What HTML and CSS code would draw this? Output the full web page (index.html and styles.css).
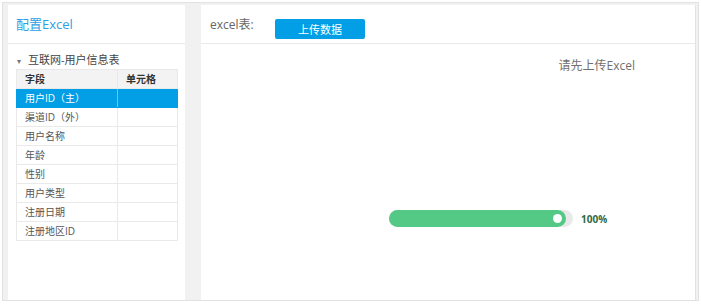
FILE: index.html
```html
<!DOCTYPE html>
<html>
<head>
    <title>配置Excel</title>
    <link rel="stylesheet" href="styles.css">
</head>
<body>
    <div class="frame">
        <!-- left: field list -->
        <div class="side">
            <div class="side-head">配置Excel</div>
            <div class="tree-title"><span class="caret">&#9662;</span>互联网-用户信息表</div>
            <table class="fields">
                <tr class="th"><td>字段</td><td>单元格</td></tr>
                <tr class="active"><td>用户ID（主）</td><td></td></tr>
                <tr><td>渠道ID（外）</td><td></td></tr>
                <tr><td>用户名称</td><td></td></tr>
                <tr><td>年龄</td><td></td></tr>
                <tr><td>性别</td><td></td></tr>
                <tr><td>用户类型</td><td></td></tr>
                <tr><td>注册日期</td><td></td></tr>
                <tr><td>注册地区ID</td><td></td></tr>
            </table>
        </div>

        <!-- right: upload area -->
        <div class="main">
            <div class="main-head">
                <span class="label">excel表:</span>
                <button class="upload">上传数据</button>
            </div>
            <div class="hint">请先上传Excel</div>
            <div class="progress-row">
                <div class="track">
                    <div class="fill" style="width: 96%"><span class="knob"></span></div>
                </div>
                <span class="pct">100%</span>
            </div>
        </div>
    </div>
</body>
</html>
```

FILE: styles.css
```css
body {
    margin: 0;
    padding: 0;
    background-color: #fff;
    font-family: "Open Sans", "Noto Sans CJK SC", sans-serif;
}

.frame {
    display: flex;
    margin: 2px 0 0 2px;
    width: 688px;
    height: 295px;
    padding: 2px 2px 0 5px;
    border: 1px solid #e2e2e2;
    background-color: #f1f1f1;
    gap: 16px;
}

/* left panel */
.side {
    width: 177px;
    background-color: #fff;
}

.side-head {
    height: 38px;
    line-height: 38px;
    padding-left: 8px;
    font-size: 13px;
    color: #2e9fe3;
    border-bottom: 1px solid #e9e9e9;
}

.tree-title {
    padding: 9px 0 0 9px;
    height: 16px;
    line-height: 14px;
    font-size: 11px;
    color: #444;
}

.caret {
    display: inline-block;
    width: 11px;
    font-size: 8px;
    color: #777;
}

.fields {
    margin-left: 8px;
    width: 162px;
    border-collapse: collapse;
    font-size: 10px;
    color: #555;
}

.fields td {
    height: 18px;
    padding: 0 0 0 8px;
    border: 1px solid #e9e9e9;
    line-height: 18px;
}

.fields td:first-child {
    width: 92px;
}

.fields .th td {
    background-color: #f3f3f3;
    font-weight: bold;
    color: #333;
}

.fields .active td {
    background-color: #029ee6;
    color: #fff;
    border-color: #029ee6;
}

.fields .active td:first-child {
    border-right-color: #6cc4f0;
}

/* right panel */
.main {
    flex: 1;
    background-color: #fff;
    border-right: 1px solid #e2e2e2;
}

.main-head {
    display: flex;
    align-items: center;
    height: 38px;
    padding-left: 9px;
    border-bottom: 1px solid #e9e9e9;
}

.label {
    font-size: 12px;
    color: #666;
    width: 65px;
}

.upload {
    width: 90px;
    height: 20px;
    padding: 0;
    border: none;
    border-radius: 2px;
    background-color: #029ee6;
    color: #fff;
    font-family: "Noto Sans CJK SC", sans-serif;
    font-size: 11px;
    margin-top: 10px;
}

.hint {
    margin-top: 14px;
    padding-right: 60px;
    text-align: right;
    font-size: 12px;
    line-height: 16px;
    color: #707070;
}

.progress-row {
    display: flex;
    align-items: center;
    margin-top: 136px;
    padding-left: 188px;
}

.track {
    width: 184px;
    height: 17px;
    border-radius: 9px;
    background-color: #e9e9e9;
}

.fill {
    position: relative;
    height: 17px;
    border-radius: 9px;
    background-color: #54c985;
}

.knob {
    position: absolute;
    right: 4px;
    top: 4px;
    width: 9px;
    height: 9px;
    border-radius: 50%;
    background-color: #fff;
}

.pct {
    margin-left: 8px;
    font-size: 10px;
    font-weight: bold;
    color: #2f6a45;
}
```
